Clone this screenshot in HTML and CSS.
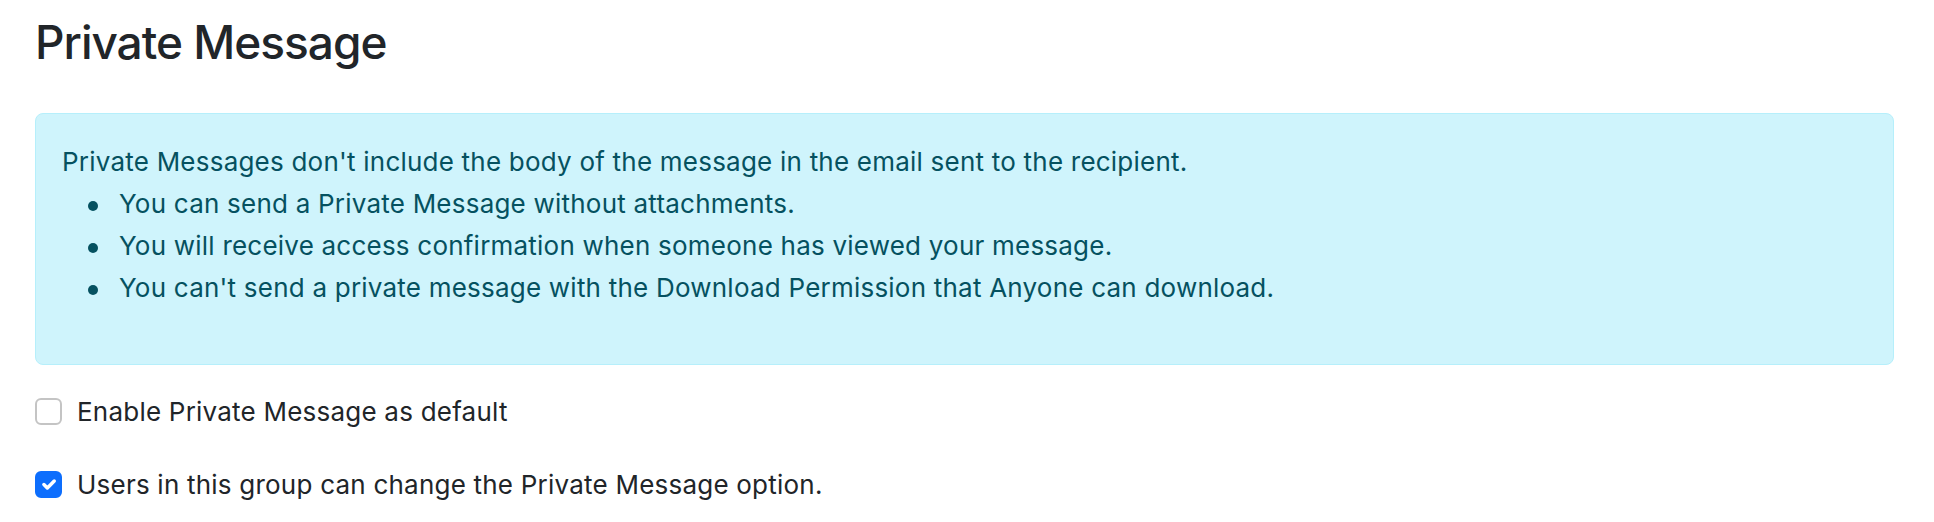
FILE: index.html
```html
<!DOCTYPE html>
<html lang="en">
<head>
    <meta charset="UTF-8">
    <meta name="viewport" content="width=device-width, initial-scale=1.0">
    <title>Private Message</title>
    <link rel="stylesheet" href="styles.css">
</head>
<body>
    <main class="settings">
        <h2 class="settings-title">Private Message</h2>

        <div class="notice">
            <p>Private Messages don't include the body of the message in the email sent to the recipient.</p>
            <ul>
                <li>You can send a Private Message without attachments.</li>
                <li>You will receive access confirmation when someone has viewed your message.</li>
                <li>You can't send a private message with the Download Permission that Anyone can download.</li>
            </ul>
        </div>

        <!-- 選項 -->
        <label class="option">
            <span class="check"></span>
            Enable Private Message as default
        </label>
        <label class="option">
            <span class="check checked">
                <svg viewBox="0 0 20 20" width="26" height="26">
                    <path d="m6 10 3 3 6-6" fill="none" stroke="#fff" stroke-width="3" stroke-linecap="round" stroke-linejoin="round"/>
                </svg>
            </span>
            Users in this group can change the Private Message option.
        </label>
    </main>
</body>
</html>
```

FILE: styles.css
```css
body {
    margin: 0;
    font-family: Inter, "Liberation Sans", sans-serif;
    font-size: 26px;
    line-height: 42px;
    letter-spacing: 0.22px;
    color: #212529;
    background-color: #ffffff;
}
.settings {
    padding: 14px 40px 0 35px;
}
.settings-title {
    margin: 0 0 41px;
    font-size: 46px;
    font-weight: 500;
    line-height: 57.6px;
    letter-spacing: -1px;
}
.notice {
    margin-bottom: 26px;
    padding: 27px 26px 29px;
    background-color: #cff4fc;
    border: 1px solid #b6effb;
    border-radius: 8px;
    color: #055160;
}
.notice p {
    margin: 0;
}
.notice ul {
    margin: 0 0 26px;
    padding-left: 26px;
    list-style: none;
}
.notice li {
    display: flex;
    align-items: center;
}
.notice li::before {
    content: "";
    flex-shrink: 0;
    width: 10px;
    height: 10px;
    margin: 4px 21px 0 0;
    border-radius: 50%;
    background-color: #055160;
}
.option {
    display: flex;
    align-items: center;
    gap: 15px;
    margin-bottom: 31px;
}
.check {
    display: flex;
    width: 27px;
    height: 27px;
    box-sizing: border-box;
    border: 2px solid #c4c4c4;
    border-radius: 6px;
    background-color: #ffffff;
}
.check.checked {
    background-color: #0d6efd;
    border-color: #0d6efd;
}
.check svg {
    width: 100%;
    height: 100%;
}
```
